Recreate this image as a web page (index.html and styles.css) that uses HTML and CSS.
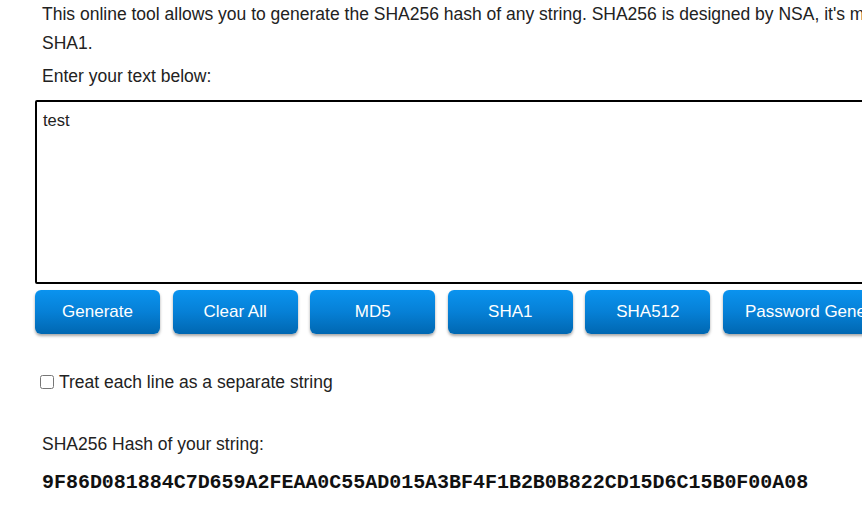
FILE: index.html
```html
<!DOCTYPE html>
<html>
<head>
<meta charset="utf-8">
<link rel="stylesheet" href="styles.css">
</head>
<body>
<div class="page">
  <p class="intro">This online tool allows you to generate the SHA256 hash of any string. SHA256 is designed by NSA, it's more reliable than<br>SHA1.</p>
  <p class="prompt">Enter your text below:</p>
  <textarea class="input">test</textarea>
  <div class="buttons">
    <button class="btn">Generate</button>
    <button class="btn">Clear All</button>
    <button class="btn">MD5</button>
    <button class="btn">SHA1</button>
    <button class="btn">SHA512</button>
    <button class="btn">Password Generator</button>
  </div>
  <label class="option"><input type="checkbox" class="check"> Treat each line as a separate string</label>
  <p class="result-label">SHA256 Hash of your string:</p>
  <div class="hash">9F86D081884C7D659A2FEAA0C55AD015A3BF4F1B2B0B822CD15D6C15B0F00A08</div>
</div>
</body>
</html>
```
FILE: styles.css
```css
html, body {
  margin: 0;
  padding: 0;
  background: #fff;
  overflow: hidden;
}
body {
  font-family: "Liberation Sans", Arial, sans-serif;
  font-size: 17.5px;
  color: #222;
}
.page {
  width: 1100px;
  padding-left: 35px;
}
.intro {
  margin: 0;
  padding-left: 7px;
  line-height: 29px;
  white-space: nowrap;
}
.prompt {
  margin: 4px 0 0;
  padding-left: 7px;
  line-height: 29px;
}
.input {
  display: block;
  box-sizing: border-box;
  margin-top: 9px;
  width: 1000px;
  height: 184px;
  border: 2px solid #000;
  border-radius: 2px;
  padding: 9px 6px 6px;
  font-family: "Liberation Sans", Arial, sans-serif;
  font-size: 16.5px;
  color: #222;
  resize: none;
  outline: none;
}
.buttons {
  display: flex;
  gap: 12.6px;
  margin-top: 6px;
}
.btn {
  flex: none;
  width: 125px;
  height: 44px;
  border: none;
  border-radius: 6px;
  background: linear-gradient(to bottom, #0a93ef 0%, #0680d6 50%, #0067b1 100%);
  box-shadow: 0 2px 3px rgba(0, 0, 0, 0.35);
  color: #fff;
  font-family: "Liberation Sans", Arial, sans-serif;
  font-size: 17px;
  padding: 0;
  white-space: nowrap;
  overflow: hidden;
}
.btn:last-child {
  width: 200px;
}
.option {
  display: flex;
  align-items: center;
  margin-top: 38px;
  padding-left: 5px;
  line-height: 20px;
}
.check {
  width: 14px;
  height: 14px;
  margin: 0 5px 0 0;
}
.result-label {
  margin: 42px 0 0;
  padding-left: 7px;
  line-height: 20px;
}
.hash {
  margin-top: 19px;
  padding-left: 7px;
  font-family: "Liberation Mono", "Courier New", monospace;
  font-weight: bold;
  font-size: 20px;
  line-height: 20px;
  letter-spacing: -0.03px;
  color: #111;
}
```
